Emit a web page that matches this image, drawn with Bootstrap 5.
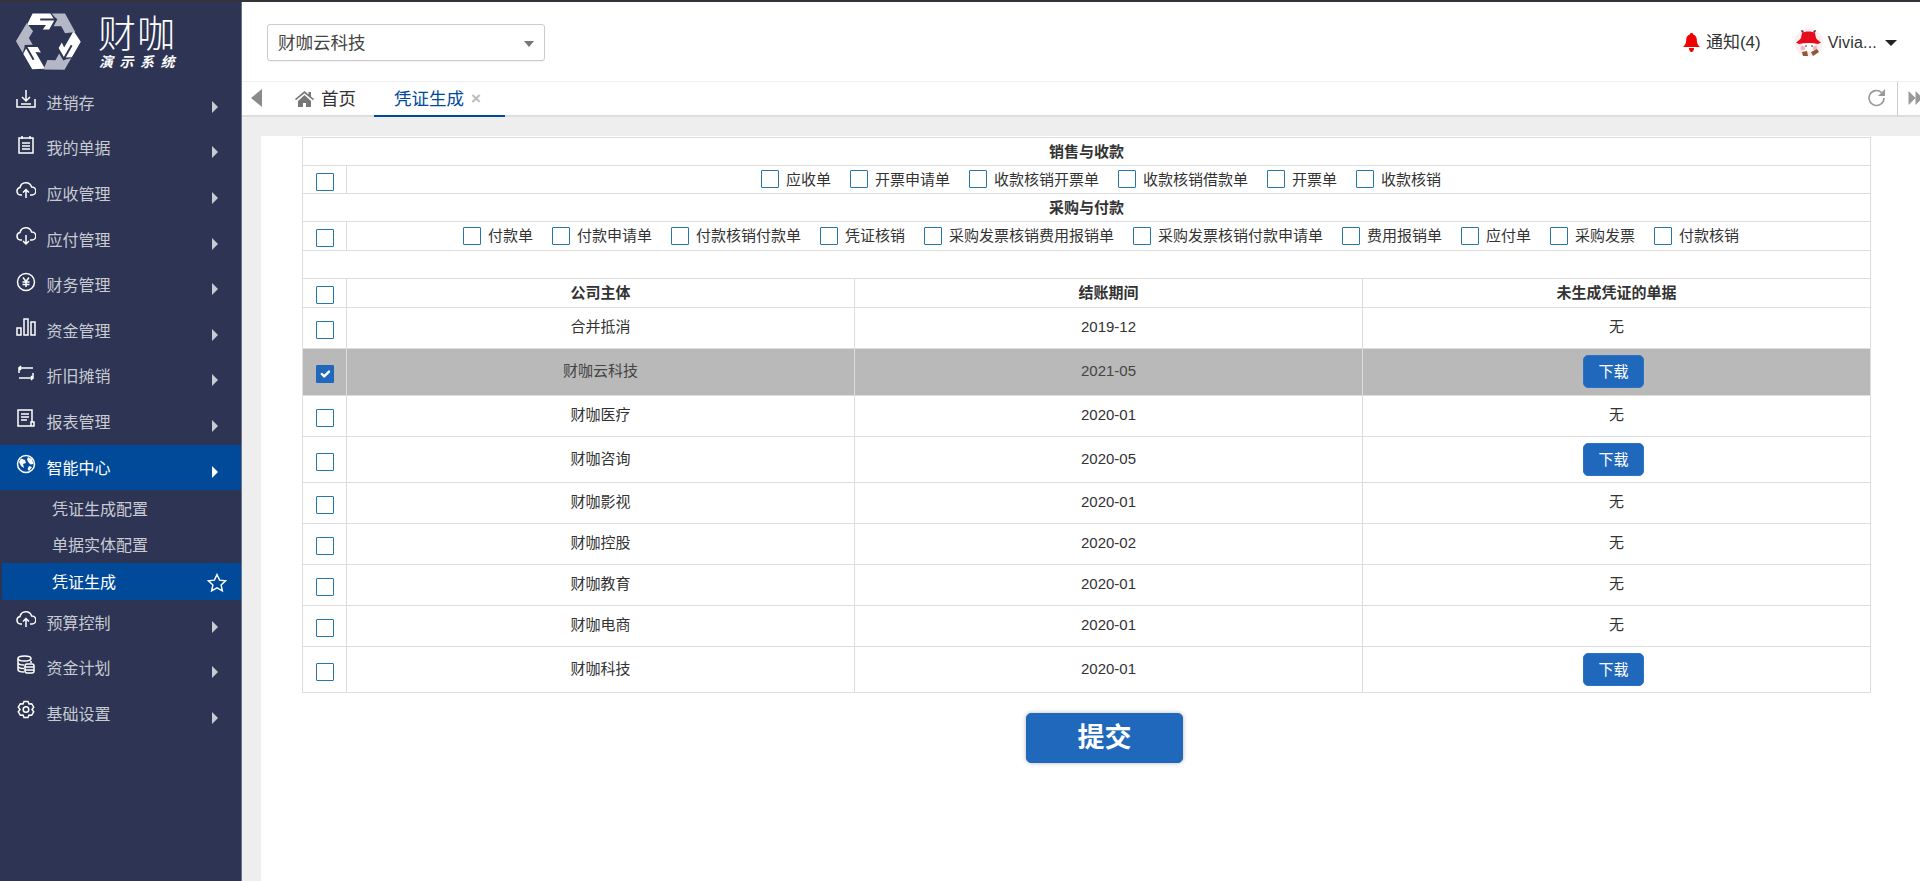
<!DOCTYPE html>
<html lang="zh-CN">
<head>
<meta charset="utf-8">
<title>凭证生成</title>
<link href="https://cdn.jsdelivr.net/npm/bootstrap@5.3.0/dist/css/bootstrap.min.css" rel="stylesheet">
<style>
html,body{height:881px;overflow:hidden;}
body{font-family:"Liberation Sans","Noto Sans CJK SC",sans-serif;font-size:15px;color:#333;background:#eee;}
a{text-decoration:none;}
.app-shell{height:881px;border-top:2px solid #33343a;}
.side-bar{width:242px;flex:none;background:#2d3454;border-right:1px solid #6d7184;height:879px;}
.logo-box{height:78px;padding:11px 0 0 16px;gap:17px;color:#fff;}
.logo-name{font-size:38px;line-height:36px;letter-spacing:1px;font-weight:300;margin-top:3px;}
.logo-sub{font-size:14px;line-height:16px;letter-spacing:6.5px;font-style:italic;margin:2px 0 0 1px;font-weight:700;}
.menu-link{height:45.6px;padding:2px 0 0 16px;color:#c9cbd3;font-size:16px;display:flex;align-items:center;}
.menu-link:hover{color:#c9cbd3;}
.menu-link svg.ico{width:20px;height:20px;flex:none;margin:-9px 10.5px 0 0;fill:none;stroke:#fff;stroke-width:1.5;}
.menu-arrow{width:0;height:0;border-left:6px solid #c9cbd3;border-top:6px solid transparent;border-bottom:6px solid transparent;margin:6px 23px 0 auto;}
.menu-on{background:#004a99;color:#fff;}
.menu-on:hover{color:#fff;}
.menu-on .menu-arrow{border-left-color:#fff;}
.sub-link{height:36.5px;padding:2px 0 0 52px;font-size:16px;color:#c9cbd3;display:flex;align-items:center;}
.sub-link:hover{color:#c9cbd3;}
.sub-on{background:#004a99;color:#fff;margin-left:2px;padding-left:50px;}
.sub-on:hover{color:#fff;}
.sub-on svg{width:20px;height:20px;margin-left:auto;margin-right:14px;fill:none;stroke:#fff;stroke-width:1.4;}
.main-col{flex:1;min-width:0;}
.top-head{height:80px;background:#fff;border-bottom:1px solid #f0f0f0;padding:0 23px 0 25px;}
.corp-pick{width:278px;height:37px;margin-top:3px;border:1px solid #ccc;border-radius:3px;padding:0 10px;font-size:17.5px;color:#444;box-shadow:0 1px 1px rgba(0,0,0,.06);}
.corp-caret{width:0;height:0;border-top:6px solid #777;border-left:5.5px solid transparent;border-right:5.5px solid transparent;margin-left:auto;margin-top:2px;}
.head-tools{margin-top:3px;}
.note-txt{font-size:17px;color:#333;margin-left:6px;}
.user-pic{margin-left:33px;}
.user-txt{font-size:16px;color:#333;margin:0 8px 0 5px;letter-spacing:.2px;}
.user-caret{width:0;height:0;border-top:6px solid #222;border-left:6px solid transparent;border-right:6px solid transparent;}
.tab-strip{height:35px;background:#fff;border-bottom:2px solid #ddd;}
.tab-left{width:0;height:0;border-right:11px solid #8a8a8a;border-top:9px solid transparent;border-bottom:9px solid transparent;margin:0 33px 0 9px;}
.tab-home{font-size:17.5px;color:#333;margin-right:18px;padding-top:1px;}
.tab-home svg{width:19px;height:17px;fill:#777;margin-right:7px;margin-top:-3px;}
.tab-act{width:131px;height:35px;border-bottom:2px solid #004a99;color:#004a99;font-size:17.5px;padding:1px 0 0 20px;margin-bottom:-2px;}
.tab-x{color:#bbb;font-size:17px;margin-left:7px;font-weight:700;line-height:1;}
.tab-reload{width:20px;height:20px;fill:none;stroke:#999;stroke-width:1.6;margin-left:auto;margin-right:10px;}
.tab-right{width:23px;height:33px;border-left:1px solid #ccc;padding-left:10px;overflow:hidden;}
.tab-right svg{width:15px;height:14px;flex:none;fill:#999;}
.work-panel{margin:19px 0 0 19px;height:746px;background:#fff;padding:1px 49px 0 41px;}
.form-tbl{table-layout:fixed;width:1569px;margin:0;border-color:#ddd;--bs-table-color:#333;}
.form-tbl td,.form-tbl th{padding:0;text-align:center;vertical-align:middle;font-size:15px;line-height:1;}
.form-tbl th{font-weight:700;}
.form-tbl .txt-cell{padding-bottom:2px;}
.form-tbl .chk-cell{padding-left:4px;}
.c-a{width:44px;}.c-b{width:508px;}.c-c{width:508px;}
.r28{height:28px;}.r29{height:29px;}.r41{height:41px;}.r47{height:47px;}.r46{height:46px;}
.form-tbl .pick-row>td{--bs-table-bg:#b9b9b9;color:#444;}
.tbl-chk.form-check-input{width:18px;height:18px;margin:5px 0 0 0;border:1.5px solid #2576ad;border-radius:1px;float:none;vertical-align:middle;}
.tbl-chk.form-check-input:checked{background-color:#2068bc;border-color:#2068bc;}
.chk-line{display:inline-flex;align-items:center;margin-right:19px;padding-top:2px;}
.chk-line .form-check-input{width:18px;height:18px;margin:0 7px 0 0;border:1.5px solid #2576ad;border-radius:1px;float:none;}
.dl-btn{width:61px;height:33px;padding:0;margin-right:6px;font-size:15px;line-height:31px;background:#2068bc;border-color:#2875c8;border-radius:5px;color:#fff;}
.go-wrap{padding:20px 0 0 36px;text-align:center;}
.go-btn{width:157px;height:50px;padding:0;font-size:27px;font-weight:700;line-height:48px;background:#2068bc;border-color:#2068bc;border-radius:5px;box-shadow:0 0 4px rgba(0,0,0,.3);color:#fff;}
</style>
</head>
<body>
<div class="app-shell d-flex">
  <aside class="side-bar">
    <div class="logo-box d-flex">
      <svg width="65" height="57" viewBox="-51 -44 102 88">
        <defs>
          <g id="logoPair">
            <path fill="#fff" d="M-33-28L-25-44H3L8-36H-13L-13-33H9L1-19H-9L-4-26H-32Z"/>
            <path fill="#b4b8c6" d="M5-44H26L42-15L26-13L20-24H8L14-35L10-38Z"/>
          </g>
        </defs>
        <use href="#logoPair"/>
        <use href="#logoPair" transform="rotate(120)"/>
        <use href="#logoPair" transform="rotate(240)"/>
      </svg>
      <div><div class="logo-name">财咖</div><div class="logo-sub">演示系统</div></div>
    </div>
    <nav class="nav flex-column">
      <a class="menu-link" href="#"><svg class="ico" viewBox="0 0 20 20"><path d="M1 10v8h18v-8M10 1v11M6 8l4 4 4-4M5 15h10"/></svg>进销存<i class="menu-arrow"></i></a>
      <a class="menu-link" href="#"><svg class="ico" viewBox="0 0 20 20"><path d="M3 3h14v15H3zM6 1v3M14 1v3M6 8h8M6 11h8M6 14h8"/></svg>我的单据<i class="menu-arrow"></i></a>
      <a class="menu-link" href="#"><svg class="ico" viewBox="0 0 20 20"><path d="M6 15H4.500a3.800 3.800 0 0 1-.5-7.500a6 6 0 0 1 11.600-.5a4 4 0 0 1 .4 8H14M10 18v-8M7 12.500l3-3 3 3"/></svg>应收管理<i class="menu-arrow"></i></a>
      <a class="menu-link" href="#"><svg class="ico" viewBox="0 0 20 20"><path d="M6 14H4.500a3.800 3.800 0 0 1-.5-7.500a6 6 0 0 1 11.600-.5a4 4 0 0 1 .4 8H14M10 9v9M7 15l3 3 3-3"/></svg>应付管理<i class="menu-arrow"></i></a>
      <a class="menu-link" href="#"><svg class="ico" viewBox="0 0 20 20"><circle cx="10" cy="10" r="8.500"/><path d="M7 5.500l3 4 3-4M6.500 10h7M6.500 12.500h7M10 9.500v5.500"/></svg>财务管理<i class="menu-arrow"></i></a>
      <a class="menu-link" href="#"><svg class="ico" viewBox="0 0 20 20"><path d="M1 11h4v7H1zM8 2h4v16H8zM15 5h4v13h-4z"/></svg>资金管理<i class="menu-arrow"></i></a>
      <a class="menu-link" href="#"><svg class="ico" viewBox="0 0 20 20"><path d="M3 10V5h14M5 3L3 5l2 2M17 10v5H3M15 13l2 2-2 2"/></svg>折旧摊销<i class="menu-arrow"></i></a>
      <a class="menu-link" href="#"><svg class="ico" viewBox="0 0 20 20"><path d="M16 14V2H2v16h16v-4h-3v4M5 6h8M5 9h8M5 12h6"/></svg>报表管理<i class="menu-arrow"></i></a>
      <a class="menu-link menu-on" href="#"><svg class="ico" viewBox="0 0 20 20"><circle cx="10" cy="10" r="8.500"/><path fill="#fff" stroke="none" d="M5 4.500l4 1.500 1 3-3 1 1 4-3-2-2-4zM12 3l4 2 1.500 5-3 .500-2-2-1.500-3zM13 12l3 1-3 4-1.500-2z"/></svg>智能中心<i class="menu-arrow"></i></a>
      <a class="sub-link" href="#">凭证生成配置</a>
      <a class="sub-link" href="#">单据实体配置</a>
      <a class="sub-link sub-on" href="#">凭证生成<svg viewBox="0 0 20 20"><path d="M10 1.500l2.600 5.600 6 .7-4.500 4.100 1.300 6L10 14.900l-5.400 3 1.300-6L1.400 7.800l6-.7z"/></svg></a>
      <a class="menu-link" href="#"><svg class="ico" viewBox="0 0 20 20"><path d="M6 15H4.500a3.800 3.800 0 0 1-.5-7.500a6 6 0 0 1 11.600-.5a4 4 0 0 1 .4 8H14M10 18v-8M7 12.500l3-3 3 3"/></svg>预算控制<i class="menu-arrow"></i></a>
      <a class="menu-link" href="#"><svg class="ico" viewBox="0 0 20 20"><ellipse cx="8.500" cy="3.500" rx="6.500" ry="2.500"/><path d="M2 3.500v11c0 1.500 2.500 2.500 6 2.500M2 7.500c0 1.500 2.500 2.500 6 2.500M2 11c0 1.500 2.500 2.500 6 2.500M15 6v2"/><rect x="9" y="9" width="9" height="9" rx="2"/><path d="M9 12h9M9 15h9"/></svg>资金计划<i class="menu-arrow"></i></a>
      <a class="menu-link" href="#"><svg class="ico" viewBox="0 0 20 20"><path d="M8 1.500h4l1 2.500 2.700-.3 2 3.400-1.700 2.400 1.700 2.400-2 3.400-2.700-.3-1 2.500H8l-1-2.500-2.700.3-2-3.400L4 9.500 2.300 7.100l2-3.400L7 4z"/><circle cx="10" cy="9.500" r="2.800"/></svg>基础设置<i class="menu-arrow"></i></a>
    </nav>
  </aside>
  <div class="main-col d-flex flex-column">
    <header class="top-head d-flex align-items-center">
      <div class="corp-pick d-flex align-items-center"><span>财咖云科技</span><i class="corp-caret"></i></div>
      <div class="head-tools ms-auto d-flex align-items-center">
        <svg width="17" height="19" viewBox="0 0 17 19" fill="#f00000"><path d="M8.500 0c1 0 1.700.7 1.700 1.600c2.300.7 3.600 2.600 3.600 5.200c0 3.400 1 5.300 3.200 7.200H0c2.200-1.900 3.200-3.800 3.200-7.200c0-2.600 1.300-4.500 3.600-5.200C6.800.7 7.500 0 8.500 0zM6 15h5c0 2.500-1.200 4-2.500 4S6 17.500 6 15z"/></svg>
        <span class="note-txt">通知(4)</span>
        <svg class="user-pic" width="29" height="29" viewBox="0 0 29 29"><circle cx="14.500" cy="14.500" r="14.200" fill="#fdeef0"/><path fill="#fff" stroke="#ccc" stroke-width=".5" d="M7 14h15v7c0 3-3 4-7 4s-8-1-8-4z"/><path fill="#e60d1f" d="M2 14.500c2-1.500 4-3 5-4.500l1-5c2-2 11-2 13 0l1 5c1 1.500 3 3 5 4.500l-3 1.500c-6-1.500-13-1.500-19 0z"/><path fill="#3a2a2a" d="M8 5l-1-3 3 1zM21 5l1-3-3 1z"/><circle cx="21" cy="20" r="2.200" fill="#f8b5b5"/><circle cx="9" cy="20" r="2.200" fill="#f8b5b5"/><circle cx="12" cy="18" r=".8" fill="#222"/><circle cx="18" cy="18" r=".8" fill="#222"/><path fill="#8a5a3a" d="M8 24l5-1 1 5h-5zM17 24l6-3 2 3-6 4z"/></svg>
        <span class="user-txt">Vivia...</span><i class="user-caret"></i>
      </div>
    </header>
    <div class="tab-strip d-flex align-items-center">
      <i class="tab-left"></i>
      <span class="tab-home"><svg viewBox="0 0 19 17"><path d="M9.500 1L0 9l1 1.200L9.500 3.300l8.500 6.900L19 9l-3-2.500V2h-2.500v2.400zM3 11v6h5v-4h3v4h5v-6L9.500 5z"/></svg>首页</span>
      <span class="tab-act d-flex align-items-center">凭证生成<span class="tab-x">×</span></span>
      <svg class="tab-reload" viewBox="0 0 20 20"><path d="M17 10a7.500 7.500 0 1 1-2.500-5.600"/><path fill="#999" stroke="none" d="M18 1v7h-7z"/></svg>
      <span class="tab-right d-flex align-items-center"><svg viewBox="0 0 14 14"><path d="M0 0l7 7-7 7zM7 0l7 7-7 7z"/></svg></span>
    </div>
    <main class="work-panel">
      <table class="table table-bordered form-tbl">
        <colgroup><col class="c-a"><col class="c-b"><col class="c-c"><col></colgroup>
        <tbody>
          <tr class="r28"><th colspan="4">销售与收款</th></tr>
          <tr class="r28">
            <td><input class="form-check-input tbl-chk" type="checkbox"></td>
            <td colspan="3" class="chk-cell">
              <label class="chk-line"><input class="form-check-input" type="checkbox">应收单</label><label class="chk-line"><input class="form-check-input" type="checkbox">开票申请单</label><label class="chk-line"><input class="form-check-input" type="checkbox">收款核销开票单</label><label class="chk-line"><input class="form-check-input" type="checkbox">收款核销借款单</label><label class="chk-line"><input class="form-check-input" type="checkbox">开票单</label><label class="chk-line"><input class="form-check-input" type="checkbox">收款核销</label>
            </td>
          </tr>
          <tr class="r28"><th colspan="4">采购与付款</th></tr>
          <tr class="r29">
            <td><input class="form-check-input tbl-chk" type="checkbox"></td>
            <td colspan="3" class="chk-cell">
              <label class="chk-line"><input class="form-check-input" type="checkbox">付款单</label><label class="chk-line"><input class="form-check-input" type="checkbox">付款申请单</label><label class="chk-line"><input class="form-check-input" type="checkbox">付款核销付款单</label><label class="chk-line"><input class="form-check-input" type="checkbox">凭证核销</label><label class="chk-line"><input class="form-check-input" type="checkbox">采购发票核销费用报销单</label><label class="chk-line"><input class="form-check-input" type="checkbox">采购发票核销付款申请单</label><label class="chk-line"><input class="form-check-input" type="checkbox">费用报销单</label><label class="chk-line"><input class="form-check-input" type="checkbox">应付单</label><label class="chk-line"><input class="form-check-input" type="checkbox">采购发票</label><label class="chk-line"><input class="form-check-input" type="checkbox">付款核销</label>
            </td>
          </tr>
          <tr class="r28"><td colspan="4"></td></tr>
          <tr class="r29"><td><input class="form-check-input tbl-chk" type="checkbox"></td><th>公司主体</th><th>结账期间</th><th>未生成凭证的单据</th></tr>
          <tr class="r41"><td><input class="form-check-input tbl-chk" type="checkbox"></td><td class="txt-cell">合并抵消</td><td class="txt-cell">2019-12</td><td class="txt-cell">无</td></tr>
          <tr class="r47 pick-row"><td><input class="form-check-input tbl-chk" type="checkbox" checked></td><td class="txt-cell">财咖云科技</td><td class="txt-cell">2021-05</td><td><button class="btn dl-btn" type="button">下载</button></td></tr>
          <tr class="r41"><td><input class="form-check-input tbl-chk" type="checkbox"></td><td class="txt-cell">财咖医疗</td><td class="txt-cell">2020-01</td><td class="txt-cell">无</td></tr>
          <tr class="r46"><td><input class="form-check-input tbl-chk" type="checkbox"></td><td class="txt-cell">财咖咨询</td><td class="txt-cell">2020-05</td><td><button class="btn dl-btn" type="button">下载</button></td></tr>
          <tr class="r41"><td><input class="form-check-input tbl-chk" type="checkbox"></td><td class="txt-cell">财咖影视</td><td class="txt-cell">2020-01</td><td class="txt-cell">无</td></tr>
          <tr class="r41"><td><input class="form-check-input tbl-chk" type="checkbox"></td><td class="txt-cell">财咖控股</td><td class="txt-cell">2020-02</td><td class="txt-cell">无</td></tr>
          <tr class="r41"><td><input class="form-check-input tbl-chk" type="checkbox"></td><td class="txt-cell">财咖教育</td><td class="txt-cell">2020-01</td><td class="txt-cell">无</td></tr>
          <tr class="r41"><td><input class="form-check-input tbl-chk" type="checkbox"></td><td class="txt-cell">财咖电商</td><td class="txt-cell">2020-01</td><td class="txt-cell">无</td></tr>
          <tr class="r46"><td><input class="form-check-input tbl-chk" type="checkbox"></td><td class="txt-cell">财咖科技</td><td class="txt-cell">2020-01</td><td><button class="btn dl-btn" type="button">下载</button></td></tr>
        </tbody>
      </table>
      <div class="go-wrap"><button class="btn go-btn" type="button">提交</button></div>
    </main>
  </div>
</div>
<script src="https://cdn.jsdelivr.net/npm/bootstrap@5.3.0/dist/js/bootstrap.bundle.min.js"></script>
</body>
</html>
